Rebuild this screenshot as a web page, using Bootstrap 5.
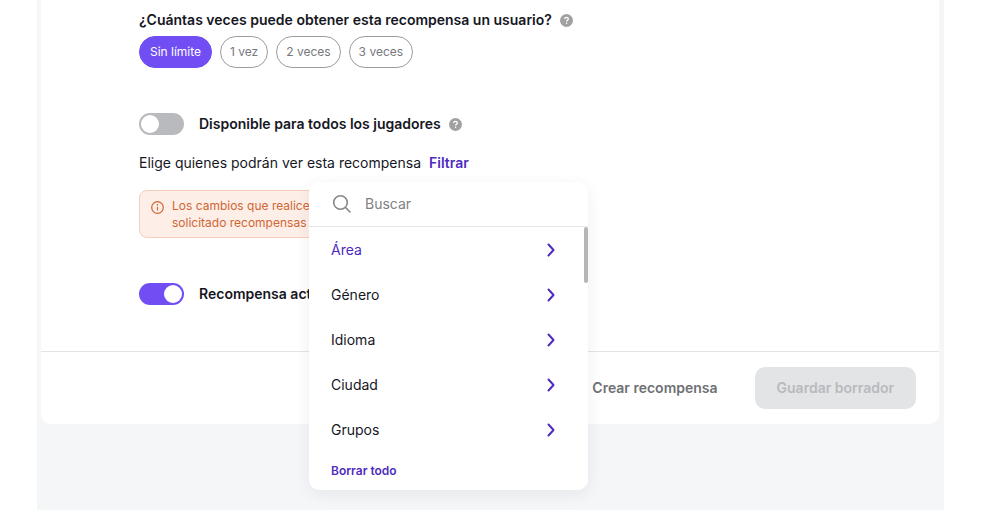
<!DOCTYPE html>
<html lang="es">
<head>
<meta charset="utf-8">
<meta name="viewport" content="width=device-width, initial-scale=1">
<title>Recompensa</title>
<link href="https://cdn.jsdelivr.net/npm/bootstrap@5.3.0/dist/css/bootstrap.min.css" rel="stylesheet">
<style>
  :root { --violet: #704ef4; --indigo: #4f2bc0; --ink: #16171f; }
  body { font-family: Inter, "Open Sans", sans-serif; font-size: 14px; line-height: 20px; color: var(--ink); background: #fff; }
  .page-shell { margin: 0 56px 2px 37px; padding: 0 5px 86px 4px; background: #f5f6f8; }
  .reward-panel { background: #fff; border-radius: 0 0 10px 10px; }
  .reward-body { padding: 10px 98px 46px; }
  .fw-label { font-weight: 600; }
  .pills { margin-top: 6px; }
  .pill { height: 32px; padding: 0 9px; border: 1px solid #9b9c9f; border-radius: 16px; background: #fff; color: #77787c; font-size: 12px; line-height: 18px; }
  .pill.active { min-width: 73px; background: var(--violet); border-color: var(--violet); color: #fff; }
  .help { width: 13px; height: 13px; flex: none; }
  .toggle { appearance: none; display: flex; align-items: center; flex: none; width: 45px; height: 22px; margin: 0 7px 0 0; padding: 0 2px; border-radius: 11px; background: #b9babd; }
  .toggle::before { content: ""; width: 18px; height: 18px; border-radius: 50%; background: #fff; }
  .toggle:checked { justify-content: flex-end; background: var(--violet); }
  .toggle-row { gap: 8px; margin-top: 45px; }
  .filter-row { margin-top: 18px; }
  .link-action { color: var(--indigo); font-weight: 600; text-decoration: none; }
  .notice { max-width: 420px; margin-top: 17px; padding: 6px 11px; border: 1px solid #f8cdb9; border-radius: 8px; background: #fdeee8; color: #cf6632; font-size: 12px; line-height: 17px; }
  .reward-footer { gap: 15px; padding: 15px 23px; border-top: 1px solid #e3e4e6; }
  .btn-plain, .btn-save { height: 42px; border: 0; padding: 0 22px; font-size: 14px; font-weight: 600; }
  .btn-plain { background: none; color: #6e7074; }
  .btn-save { border-radius: 10px; background: #e3e4e6; color: #b8babd; }
  .filter-menu { position: absolute; top: 100%; left: 170px; z-index: 5; width: 279px; margin-top: 9px; border-radius: 10px; background: #fff; box-shadow: 0 4px 16px rgba(20, 24, 40, .07); }
  .search-row { gap: 13px; height: 45px; padding: 0 23px; border-bottom: 1px solid #e6e7e9; }
  .search-row input { width: 100%; min-width: 0; padding: 0; border: 0; outline: 0; background: none; color: var(--ink); }
  .search-row input::placeholder { color: #7f8084; opacity: 1; }
  .option { height: 45px; padding: 0 33px 0 22px; border: 0; background: none; color: var(--ink); text-align: left; }
  .option.active { color: var(--indigo); }
  .thumb { position: absolute; top: 0; right: 0; width: 4px; height: 56px; border-radius: 2px; background: #b5b6b8; }
  .clear-all { height: 38px; padding: 0 22px; font-size: 12px; }
</style>
</head>
<body>
<svg class="d-none" aria-hidden="true">
  <symbol id="help" viewBox="0 0 13 13"><circle cx="6.5" cy="6.5" r="6.5" fill="#a1a1a3"/><path d="M4.7 5.1c0-1 .8-1.7 1.8-1.7s1.8.6 1.8 1.6c0 1.3-1.7 1.2-1.7 2.5" fill="none" stroke="#fff" stroke-width="1.3"/><circle cx="6.6" cy="9.3" r=".8" fill="#fff"/></symbol>
  <symbol id="chevron" viewBox="0 0 8 14"><path d="M1.5 1.5 6.5 7l-5 5.5" fill="none" stroke="#4f2bc0" stroke-width="2" stroke-linecap="round" stroke-linejoin="round"/></symbol>
</svg>
<main class="page-shell">
  <form class="reward-panel">
    <div class="reward-body">
      <div class="d-flex align-items-center gap-2">
        <span class="fw-label" id="limit">¿Cuántas veces puede obtener esta recompensa un usuario?</span>
        <svg class="help"><use href="#help"/></svg>
      </div>
      <div class="pills d-flex flex-wrap gap-2" role="group" aria-labelledby="limit">
        <button type="button" class="pill active">Sin límite</button>
        <button type="button" class="pill">1 vez</button>
        <button type="button" class="pill">2 veces</button>
        <button type="button" class="pill">3 veces</button>
      </div>
      <div class="toggle-row d-flex align-items-center">
        <input class="toggle" type="checkbox" role="switch" id="all-players">
        <label class="fw-label" for="all-players">Disponible para todos los jugadores</label>
        <svg class="help"><use href="#help"/></svg>
      </div>
      <div class="filter-row position-relative d-flex align-items-center">
        <span class="me-2">Elige quienes podrán ver esta recompensa</span>
        <a class="link-action" href="#">Filtrar</a>
        <div class="filter-menu">
          <div class="search-row d-flex align-items-center">
            <svg width="20" height="20" viewBox="0 0 20 20" class="flex-shrink-0"><circle cx="8.5" cy="8.5" r="6.8" fill="none" stroke="#85868a" stroke-width="1.6"/><path d="m13.5 13.5 4.5 4.5" stroke="#85868a" stroke-width="1.6" stroke-linecap="round"/></svg>
            <input type="text" placeholder="Buscar" aria-label="Buscar">
          </div>
          <div class="position-relative d-flex flex-column">
            <button type="button" class="option active d-flex align-items-center justify-content-between">Área<svg width="8" height="14"><use href="#chevron"/></svg></button>
            <button type="button" class="option d-flex align-items-center justify-content-between">Género<svg width="8" height="14"><use href="#chevron"/></svg></button>
            <button type="button" class="option d-flex align-items-center justify-content-between">Idioma<svg width="8" height="14"><use href="#chevron"/></svg></button>
            <button type="button" class="option d-flex align-items-center justify-content-between">Ciudad<svg width="8" height="14"><use href="#chevron"/></svg></button>
            <button type="button" class="option d-flex align-items-center justify-content-between">Grupos<svg width="8" height="14"><use href="#chevron"/></svg></button>
            <span class="thumb"></span>
          </div>
          <div class="clear-all d-flex align-items-center"><a class="link-action" href="#">Borrar todo</a></div>
        </div>
      </div>
      <div class="notice d-flex gap-2">
        <svg width="13" height="13" viewBox="0 0 13 13" class="flex-shrink-0 mt-1"><circle cx="6.5" cy="6.5" r="5.8" fill="none" stroke="#cf6632" stroke-width="1.2"/><path d="M6.5 5.8v3.7" stroke="#cf6632" stroke-width="1.2"/><circle cx="6.5" cy="3.9" r=".8" fill="#cf6632"/></svg>
        <span>Los cambios que realices<br>solicitado recompensas</span>
      </div>
      <div class="toggle-row d-flex align-items-center">
        <input class="toggle" type="checkbox" role="switch" id="active" checked>
        <label class="fw-label" for="active">Recompensa activa</label>
      </div>
    </div>
    <div class="reward-footer d-flex justify-content-end">
      <button type="button" class="btn-plain">Crear recompensa</button>
      <button type="submit" class="btn-save" disabled>Guardar borrador</button>
    </div>
  </form>
</main>
<script src="https://cdn.jsdelivr.net/npm/bootstrap@5.3.0/dist/js/bootstrap.bundle.min.js"></script>
</body>
</html>
